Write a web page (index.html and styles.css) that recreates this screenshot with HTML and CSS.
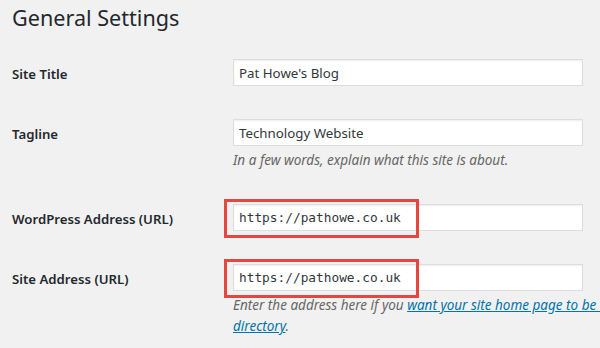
FILE: index.html
```html
<!DOCTYPE html>
<html lang="en">
<head>
<meta charset="UTF-8">
<title>General Settings</title>
<link rel="stylesheet" href="styles.css">
</head>
<body>
    <div class="wrap">
        <h1 class="page-title">General Settings</h1>

        <div class="form-row">
            <label class="row-label" for="blogname">Site Title</label>
            <div class="row-field">
                <input id="blogname" class="text-input" type="text" value="Pat Howe's Blog">
            </div>
        </div>

        <div class="form-row">
            <label class="row-label" for="blogdescription">Tagline</label>
            <div class="row-field">
                <input id="blogdescription" class="text-input" type="text" value="Technology Website">
                <p class="description">In a few words, explain what this site is about.</p>
            </div>
        </div>

        <div class="form-row">
            <label class="row-label" for="siteurl">WordPress Address (URL)</label>
            <div class="row-field">
                <input id="siteurl" class="text-input code" type="url" value="https://pathowe.co.uk">
                <!-- annotation box drawn over the field -->
                <span class="highlight"></span>
            </div>
        </div>

        <div class="form-row">
            <label class="row-label" for="home">Site Address (URL)</label>
            <div class="row-field">
                <input id="home" class="text-input code" type="url" value="https://pathowe.co.uk">
                <span class="highlight"></span>
                <p class="description wide">Enter the address here if you <a href="#">want your site home page to be different from your WordPress installation directory</a>.</p>
            </div>
        </div>
    </div>
</body>
</html>
```

FILE: styles.css
```css
body {
    margin: 0;
    overflow: hidden;
    background: #f1f1f1;
    color: #23282d;
    font-family: "Noto Sans", "Open Sans", sans-serif;
    font-size: 13px;
}

.wrap {
    padding: 3px 0 0 12px;
    overflow: hidden;
    height: 345px;
}

.page-title {
    margin: 0 0 11px;
    font-size: 21.6px;
    font-weight: 400;
    line-height: 30px;
    color: #23282d;
}

.form-row {
    display: flex;
    align-items: flex-start;
    padding: 15px 0 18px;
}

.row-label {
    width: 221px;
    flex-shrink: 0;
    padding-top: 6px;
    font-size: 13.2px;
    font-weight: 600;
    line-height: 18px;
}

.row-field {
    position: relative;
    width: 350px;
    flex-shrink: 0;
}

.text-input {
    display: block;
    box-sizing: border-box;
    width: 350px;
    height: 27px;
    margin: 0;
    padding: 0 5px;
    border: 1px solid #ddd;
    background: #fff;
    box-shadow: inset 0 1px 2px rgba(0, 0, 0, 0.07);
    color: #32373c;
    font-family: "Noto Sans", "Open Sans", sans-serif;
    font-size: 13.3px;
    outline: none;
}

.text-input.code {
    font-family: "DejaVu Sans Mono", "Liberation Mono", monospace;
    font-size: 12.8px;
}

.highlight {
    position: absolute;
    top: -5px;
    left: -9px;
    width: 195px;
    height: 39px;
    box-sizing: border-box;
    border: 3px solid #e7463f;
    pointer-events: none;
}

.description {
    margin: 4px 0 0;
    width: 380px;
    color: #666;
    font-size: 13.5px;
    font-style: italic;
    line-height: 21px;
}

.description.wide {
    width: 640px;
}

.description a {
    color: #0073aa;
}
```
